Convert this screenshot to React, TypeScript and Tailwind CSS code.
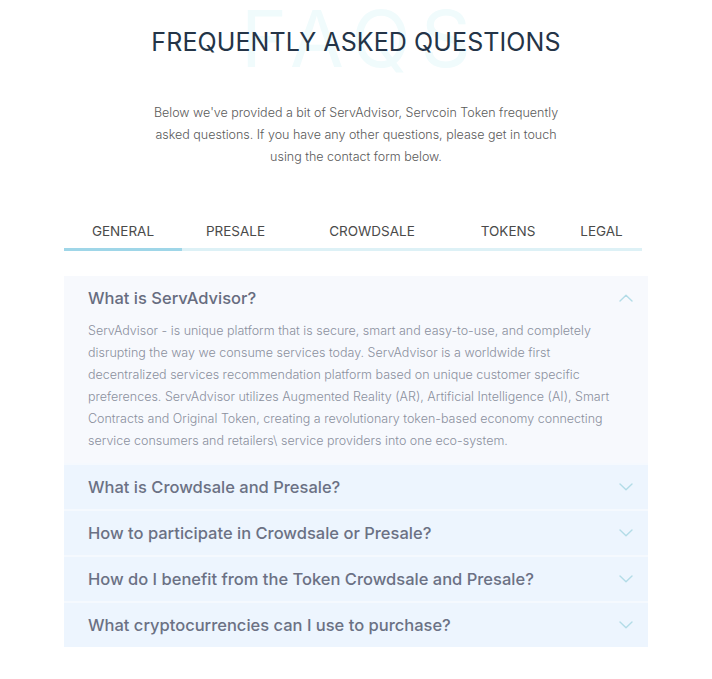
import React from "react";

const font = { fontFamily: "Inter, 'Open Sans', 'Noto Sans', sans-serif" };

function Chevron({ up }: { up?: boolean }) {
  return (
    <svg width="14" height="8" viewBox="0 0 14 8" fill="none">
      <path
        d={up ? "M1 7 L7 1.2 L13 7" : "M1 1 L7 6.8 L13 1"}
        stroke="#b3dce7"
        strokeWidth="1.4"
        strokeLinecap="round"
        strokeLinejoin="round"
      />
    </svg>
  );
}

const tabs = [
  { label: "GENERAL", w: "w-[118px]" },
  { label: "PRESALE", w: "w-[107px]" },
  { label: "CROWDSALE", w: "w-[166px]" },
  { label: "TOKENS", w: "w-[106px]" },
  { label: "LEGAL", w: "w-[81px]" },
];

const questions = [
  "What is Crowdsale and Presale?",
  "How to participate in Crowdsale or Presale?",
  "How do I benefit from the Token Crowdsale and Presale?",
  "What cryptocurrencies can I use to purchase?",
];

export default function App() {
  return (
    <div className="w-[712px] h-[679px] bg-white overflow-hidden" style={font}>
      <div className="relative flex flex-col items-center pt-[26px]">
        <div
          aria-hidden="true"
          className="absolute left-0 right-0 top-[0px] flex justify-center pointer-events-none select-none"
        >
          <span className="text-[78px] leading-[78px] font-normal tracking-[10px] pl-[10px] text-[#f0fbfc]">FAQS</span>
        </div>
        <h1 className="relative text-[25px] leading-[32px] text-[#243447] font-normal tracking-[0.1px]">
          FREQUENTLY ASKED QUESTIONS
        </h1>
        <p className="relative mt-[44px] w-[420px] text-center text-[12.5px] leading-[22px] text-[#5a5a5a] font-light">
          Below we've provided a bit of ServAdvisor, Servcoin Token frequently asked questions. If you have any other
          questions, please get in touch using the contact form below.
        </p>
      </div>

      <div className="ml-[64px] mt-[49px] w-[578px]">
        <div className="flex">
          {tabs.map((t, i) => (
            <div key={t.label} className={`${t.w} flex flex-col`}>
              <div className="h-[28px] flex items-center justify-center text-[13.5px] text-[#4a4a4a] font-normal">
                {t.label}
              </div>
              <div className={`h-[3px] mt-[3px] ${i === 0 ? "bg-[#9fd6e8]" : "bg-[#ddf1f6]"}`} />
            </div>
          ))}
        </div>
      </div>

      <div className="ml-[64px] mt-[25px] w-[584px] flex flex-col">
        <div className="bg-[#f7f9fd] px-[24px] pt-[9px] pb-[11px]">
          <div className="flex items-center justify-between h-[26px]">
            <span className="text-[16.5px] font-medium text-[#676d80]">What is ServAdvisor?</span>
            <span className="mr-[-9px]">
              <Chevron up />
            </span>
          </div>
          <p className="mt-[9px] w-[530px] text-[12.5px] leading-[22px] text-[#8b909d] font-light">
            ServAdvisor - is unique platform that is secure, smart and easy-to-use, and completely disrupting the way we
            consume services today. ServAdvisor is a worldwide first decentralized services recommendation platform based
            on unique customer specific preferences. ServAdvisor utilizes Augmented Reality (AR), Artificial Intelligence
            (AI), Smart Contracts and Original Token, creating a revolutionary token-based economy connecting service
            consumers and retailers\ service providers into one eco-system.
          </p>
        </div>
        {questions.map((q) => (
          <div
            key={q}
            className="h-[46px] bg-[#edf5fe] border-t-2 border-[#f5f9fe] px-[24px] flex items-center justify-between"
          >
            <span className="text-[16.5px] font-medium text-[#6b7184]">{q}</span>
            <span className="mr-[-9px]">
              <Chevron />
            </span>
          </div>
        ))}
      </div>
    </div>
  );
}
